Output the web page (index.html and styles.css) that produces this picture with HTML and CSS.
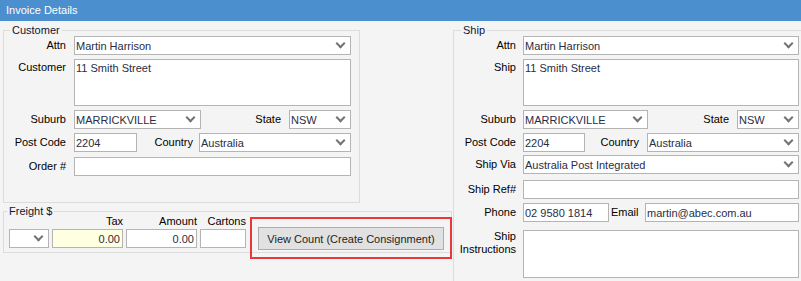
FILE: index.html
```html
<!DOCTYPE html>
<html>
<head>
    <meta charset="utf-8">
    <title>Invoice Details</title>
    <link rel="stylesheet" href="styles.css">
</head>

<body>

    <div class="TitleBar">Invoice Details</div>

    <div class="Panels">
        <div class="LeftPanel">
            <fieldset class="Group CustomerGroup">
                <legend>Customer</legend>
                <div class="Rows">
                    <div class="Row">
                        <label class="Label">Attn</label>
                        <div class="Combo Wide">Martin Harrison</div>
                    </div>
                    <div class="Row">
                        <label class="Label MemoLabel">Customer</label>
                        <textarea class="Field Memo Wide">11 Smith Street</textarea>
                    </div>
                    <div class="Row">
                        <label class="Label">Suburb</label>
                        <div class="Combo Suburb">MARRICKVILLE</div>
                        <label class="Label Fill">State</label>
                        <div class="Combo State">NSW</div>
                    </div>
                    <div class="Row">
                        <label class="Label">Post Code</label>
                        <input type="text" class="Field PostCode" value="2204">
                        <label class="Label Fill Tight">Country</label>
                        <div class="Combo Country">Australia</div>
                    </div>
                    <div class="Row OrderRow">
                        <label class="Label">Order #</label>
                        <input type="text" class="Field Wide" value="">
                    </div>
                </div>
            </fieldset>

            <fieldset class="Group FreightGroup">
                <legend>Freight $</legend>
                <div class="FreightRow">
                    <div class="FreightField">
                        <span class="ColLabel"></span>
                        <div class="Combo Carrier"></div>
                    </div>
                    <div class="FreightField">
                        <span class="ColLabel">Tax</span>
                        <input type="text" class="Field Money Tax" value="0.00">
                    </div>
                    <div class="FreightField">
                        <span class="ColLabel">Amount</span>
                        <input type="text" class="Field Money" value="0.00">
                    </div>
                    <div class="FreightField">
                        <span class="ColLabel">Cartons</span>
                        <input type="text" class="Field Cartons" value="">
                    </div>
                    <div class="Highlight">
                        <button class="Action">View Count (Create Consignment)</button>
                    </div>
                </div>
            </fieldset>
        </div>

        <fieldset class="Group ShipGroup">
            <legend>Ship</legend>
            <div class="Rows">
                <div class="Row">
                    <label class="Label">Attn</label>
                    <div class="Combo Wide">Martin Harrison</div>
                </div>
                <div class="Row">
                    <label class="Label MemoLabel">Ship</label>
                    <textarea class="Field Memo Wide">11 Smith Street</textarea>
                </div>
                <div class="Row">
                    <label class="Label">Suburb</label>
                    <div class="Combo Suburb">MARRICKVILLE</div>
                    <label class="Label Fill">State</label>
                    <div class="Combo State">NSW</div>
                </div>
                <div class="Row">
                    <label class="Label">Post Code</label>
                    <input type="text" class="Field PostCode" value="2204">
                    <label class="Label Fill">Country</label>
                    <div class="Combo Country">Australia</div>
                </div>
                <div class="Row ViaRow">
                    <label class="Label">Ship Via</label>
                    <div class="Combo Wide">Australia Post Integrated</div>
                </div>
                <div class="Row RefRow">
                    <label class="Label">Ship Ref#</label>
                    <input type="text" class="Field Wide" value="">
                </div>
                <div class="Row">
                    <label class="Label">Phone</label>
                    <input type="text" class="Field Phone" value="02 9580 1814">
                    <label class="Label Fill EmailLabel">Email</label>
                    <input type="text" class="Field Email" value="martin@abec.com.au">
                </div>
                <div class="Row NotesRow">
                    <label class="Label NotesLabel">Ship<br>Instructions</label>
                    <textarea class="Field Notes Wide"></textarea>
                </div>
            </div>
        </fieldset>
    </div>

</body>
</html>
```

FILE: styles.css
```css
* {
    box-sizing: border-box;
}

body {
    margin: 0;
    width: 801px;
    height: 281px;
    overflow: hidden;
    background: #f4f4f4;
    font-family: "Liberation Sans", Arial, sans-serif;
    font-size: 11px;
    color: #000;
}

.TitleBar {
    height: 21px;
    padding-left: 6px;
    line-height: 21px;
    background: #4b8fce;
    color: #fff;
}

.Panels {
    display: flex;
    align-items: flex-start;
}

.LeftPanel {
    flex: none;
    width: 453px;
    display: flex;
    flex-direction: column;
}

/* group boxes */
.Group {
    min-width: 0;
    margin: 3px 0 0 3px;
    padding: 0 8px 26px 0;
    border: 1px solid #dcdcdc;
}

.Group legend {
    margin-left: 6px;
    padding: 0 2px;
    line-height: 12px;
    color: #101535;
}

.CustomerGroup {
    width: 357px;
}

.FreightGroup {
    width: 449px;
    margin-top: 2px;
    padding: 0 0 2px 0;
}

.FreightGroup legend {
    margin-left: 3px;
}

.ShipGroup {
    flex: none;
    width: 360px;
    margin-left: 0;
    padding: 0 0 10px 0;
}

.ShipGroup legend {
    margin-left: 7px;
}

/* rows */
.Rows {
    display: flex;
    flex-direction: column;
    gap: 4px;
}

.Row {
    display: flex;
    align-items: flex-start;
    gap: 8px;
}

.ShipGroup .Row {
    width: 345px;
    gap: 7px;
}

.OrderRow {
    margin-top: 1px;
}

.ViaRow {
    margin-top: -1px;
}

.RefRow {
    margin-top: 2px;
}

.NotesRow {
    margin-top: 4px;
}

.Label {
    flex: none;
    width: 62px;
    line-height: 19px;
    text-align: right;
    white-space: nowrap;
}

.Label.Fill {
    flex: 1;
    width: auto;
    min-width: 0;
}

.Label.Tight {
    margin-right: -2px;
}

.ShipGroup .Label.Fill {
    margin-right: 1px;
}

.ShipGroup .Label.EmailLabel {
    margin-right: 0;
}

.MemoLabel {
    padding-top: 2px;
    line-height: 13px;
}

.NotesLabel {
    line-height: 13px;
}

/* controls */
.Combo,
.Field {
    flex: none;
    height: 19px;
    border: 1px solid #b4b4b4;
    background: #fff;
    color: #2a2d45;
    font: inherit;
    white-space: nowrap;
    outline: none;
}

.Combo {
    display: flex;
    align-items: center;
    padding: 0 6px 0 1px;
}

.Combo::after {
    content: '';
    flex: none;
    width: 5px;
    height: 5px;
    margin-left: auto;
    border-right: 2px solid #727272;
    border-bottom: 2px solid #727272;
    transform: translateY(-2px) rotate(45deg);
}

.Field {
    padding: 0 1px;
}

.Memo,
.Notes {
    resize: none;
    overflow: hidden;
    padding: 2px 1px;
    line-height: 13px;
}

.Memo {
    height: 47px;
}

.Notes {
    height: 48px;
}

.Wide {
    width: 277px;
}

.ShipGroup .Wide {
    width: 276px;
}

.Suburb {
    width: 127px;
}

.ShipGroup .Suburb {
    width: 125px;
}

.State {
    width: 62px;
}

.PostCode {
    width: 63px;
}

.ShipGroup .PostCode {
    width: 62px;
}

.Country {
    width: 152px;
}

.Phone {
    width: 86px;
    margin-right: -5px;
}

.Email {
    width: 154px;
}

/* freight */
.FreightRow {
    display: flex;
    align-items: flex-start;
    gap: 3px;
    margin-top: -2px;
    padding-left: 5px;
}

.FreightField {
    display: flex;
    flex-direction: column;
}

.ColLabel {
    height: 14px;
    line-height: 13px;
    text-align: right;
    white-space: nowrap;
}

.Carrier {
    width: 40px;
}

.Money {
    width: 71px;
    padding-right: 2px;
    text-align: right;
}

.Tax {
    background: #ffffe1;
}

.Cartons {
    width: 46px;
}

.Highlight {
    position: relative;
    margin: 12px 0 0 9px;
}

.Highlight::after {
    content: '';
    position: absolute;
    top: -10px;
    right: -8px;
    bottom: -9px;
    left: -8px;
    border: 2px solid #e8383c;
    pointer-events: none;
}

.Action {
    display: block;
    width: 186px;
    height: 23px;
    padding: 0;
    border: 1px solid #adadad;
    background: #e1e1e1;
    color: #1e1e1e;
    font: inherit;
}
```
